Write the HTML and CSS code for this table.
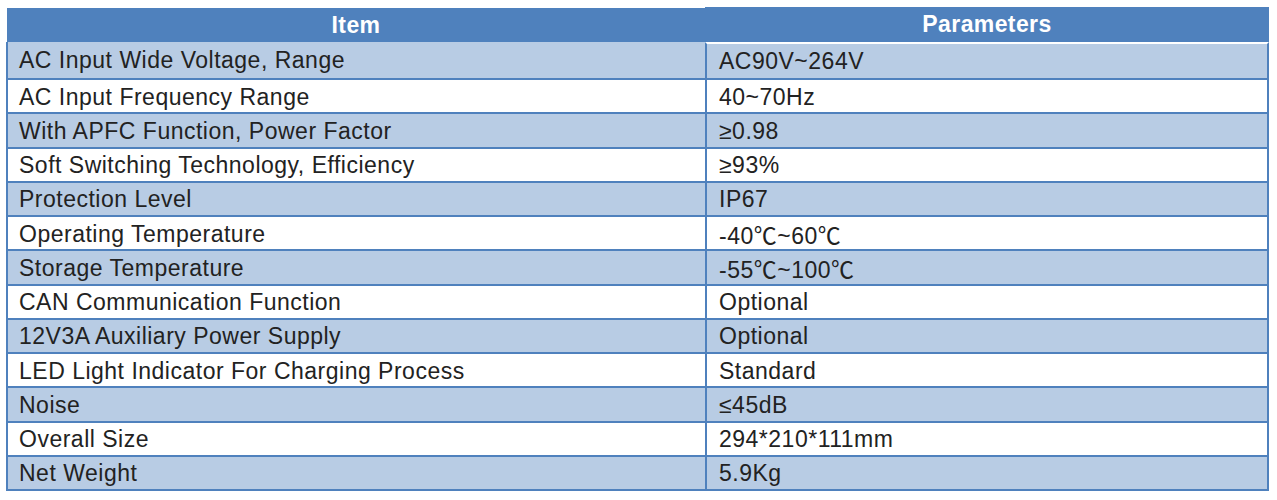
FILE: index.html
```html
<!DOCTYPE html>
<html lang="en">
<head>
<meta charset="utf-8">
<title>Specifications</title>
<link rel="stylesheet" href="styles.css">
</head>
<body>
<div class="spec" role="table">
  <div class="row head" role="row">
    <div class="hd item" role="columnheader">Item</div>
    <div class="hd param" role="columnheader">Parameters</div>
  </div>
  <div class="row first" role="row"><div class="c k" role="cell">AC Input Wide Voltage, Range</div><div class="c v" role="cell">AC90V~264V</div></div>
  <div class="row" role="row"><div class="c k" role="cell">AC Input Frequency Range</div><div class="c v" role="cell">40~70Hz</div></div>
  <div class="row" role="row"><div class="c k" role="cell">With APFC Function, Power Factor</div><div class="c v" role="cell">≥0.98</div></div>
  <div class="row" role="row"><div class="c k" role="cell">Soft Switching Technology, Efficiency</div><div class="c v" role="cell">≥93%</div></div>
  <div class="row" role="row"><div class="c k" role="cell">Protection Level</div><div class="c v" role="cell">IP67</div></div>
  <div class="row" role="row"><div class="c k" role="cell">Operating Temperature</div><div class="c v" role="cell">-40℃~60℃</div></div>
  <div class="row" role="row"><div class="c k" role="cell">Storage Temperature</div><div class="c v" role="cell">-55℃~100℃</div></div>
  <div class="row" role="row"><div class="c k" role="cell">CAN Communication Function</div><div class="c v" role="cell">Optional</div></div>
  <div class="row" role="row"><div class="c k" role="cell">12V3A Auxiliary Power Supply</div><div class="c v" role="cell">Optional</div></div>
  <div class="row" role="row"><div class="c k" role="cell">LED Light Indicator For Charging Process</div><div class="c v" role="cell">Standard</div></div>
  <div class="row" role="row"><div class="c k" role="cell">Noise</div><div class="c v" role="cell">≤45dB</div></div>
  <div class="row" role="row"><div class="c k" role="cell">Overall Size</div><div class="c v" role="cell">294*210*111mm</div></div>
  <div class="row" role="row"><div class="c k" role="cell">Net Weight</div><div class="c v" role="cell">5.9Kg</div></div>
</div>
</body>
</html>
```
FILE: styles.css
```css
* { box-sizing: border-box; }
html, body { margin: 0; padding: 0; background: #fff; }
body {
  font-family: "Liberation Sans", Arial, "Noto Sans CJK SC", sans-serif;
}
.spec {
  display: grid;
  grid-template-columns: 699px 564px;
  grid-template-rows: 35px 38px repeat(12, 34.25px);
  width: 1263px;
  margin: 7px 0 0 6px;
}
.row { display: contents; }
.hd {
  background: #4f81bd;
  color: #fff;
  font-weight: bold;
  font-size: 23px;
  letter-spacing: 0.4px;
  display: flex;
  align-items: center;
  justify-content: center;
}
.hd.item {
  border-top: 1px solid #fff;
  border-left: 1px solid #fff;
}
.c {
  display: flex;
  align-items: center;
  font-size: 23px;
  letter-spacing: 0.5px;
  color: #222;
  background: #fff;
  border-bottom: 2px solid #4f81bd;
  border-left: 2px solid #4f81bd;
  padding-top: 2px;
  white-space: nowrap;
}
.row.first .c { padding-top: 0; }
.c.k { padding-left: 11px; }
.c.v { padding-left: 12px; border-right: 2px solid #4f81bd; }
.row.first .c.v { border-top: 2px solid #fff; }
.row:nth-child(even) .c { background: #b8cce4; }
```
